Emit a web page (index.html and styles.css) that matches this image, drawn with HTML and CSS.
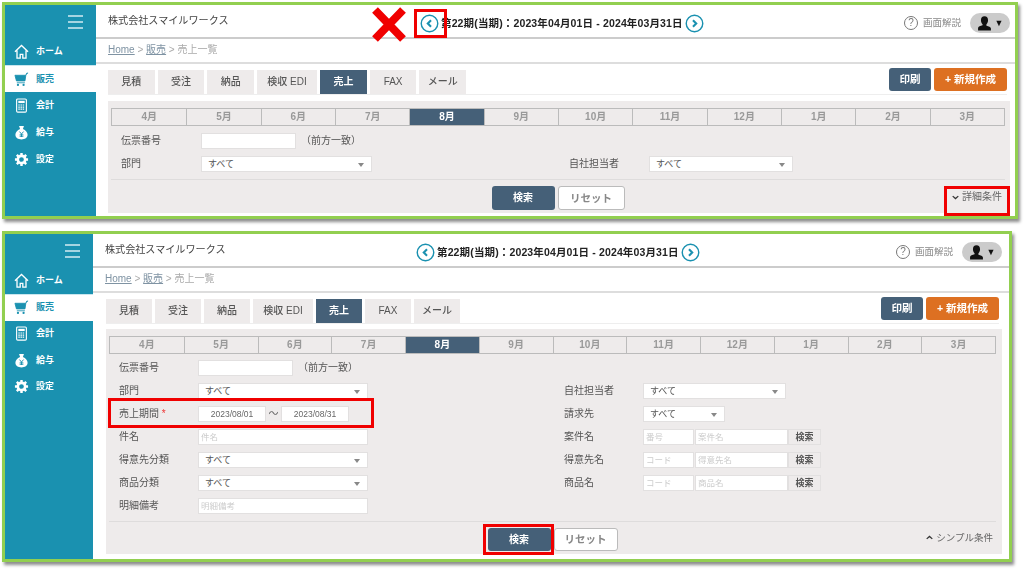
FILE: index.html
```html
<!DOCTYPE html>
<html lang="ja">
<head>
<meta charset="utf-8">
<title>売上一覧</title>
<link rel="stylesheet" href="styles.css">
</head>
<body>
<svg width="0" height="0" class="defs">
  <symbol id="i-prev" viewBox="0 0 20 20"><circle cx="10" cy="10" r="8.7" fill="none" stroke="currentColor" stroke-width="1.5"/><path d="M11.6 6.6 8.2 10l3.4 3.4" fill="none" stroke="currentColor" stroke-width="2.2"/></symbol>
  <symbol id="i-next" viewBox="0 0 20 20"><circle cx="10" cy="10" r="8.7" fill="none" stroke="currentColor" stroke-width="1.5"/><path d="M8.4 6.6 11.8 10l-3.4 3.4" fill="none" stroke="currentColor" stroke-width="2.2"/></symbol>
  <symbol id="i-home" viewBox="0 0 16 16"><path d="M1 8.2 8 1.6l7 6.6M3.2 6.8V15h3.4v-4h2.8v4h3.4V6.8" fill="none" stroke="currentColor" stroke-width="1.4"/></symbol>
  <symbol id="i-cart" viewBox="0 0 16 16"><path d="M1 3.5h11.6l-.9 6H2.6zM12.6 3.5 13.4 1.4 15 1M3 11.5h8.6" fill="currentColor" stroke="currentColor" stroke-width=".9"/><circle cx="4.2" cy="13.8" r="1.2" fill="currentColor"/><circle cx="10.2" cy="13.8" r="1.2" fill="currentColor"/></symbol>
  <symbol id="i-calc" viewBox="0 0 16 16"><rect x="2.8" y="1" width="10.4" height="14" rx="1.2" fill="none" stroke="currentColor" stroke-width="1.2"/><rect x="4.6" y="3" width="6.8" height="2.4" fill="currentColor"/><path d="M4.6 7.5h6.8M4.6 9.7h6.8M4.6 11.9h6.8" stroke="currentColor" stroke-width="1.2" stroke-dasharray="1.6 .7"/></symbol>
  <symbol id="i-bag" viewBox="0 0 16 16"><path d="M5.4 1h5.2L9.5 4.3c3 1.2 5 3.500 5 6.200C14.500 13.600 11.600 15.500 8 15.500S1.500 13.600 1.500 10.500c0-2.700 2-5 5-6.200z" fill="currentColor"/><path d="M5.800 7 8 9.600 10.200 7M8 9.600v3.200M6 10.500h4M6 12h4" fill="none" stroke="#1a91b0" stroke-width="1"/></symbol>
  <symbol id="i-gear" viewBox="0 0 16 16"><circle cx="8" cy="8" r="3.900" fill="none" stroke="currentColor" stroke-width="2.800"/><path d="M8 1v3M8 12v3M1 8h3M12 8h3M3 3l2.100 2.100M10.900 10.900 13 13M13 3l-2.100 2.100M5.100 10.900 3 13" stroke="currentColor" stroke-width="2.600"/></symbol>
  <symbol id="i-user" viewBox="0 0 14 14"><path d="M7 .3c2.200 0 3.300 1.500 3.300 3.700 0 1.600-.6 3-1.500 3.700v1.500c2 .6 4.200 1.200 4.200 2.500V13.600H1v-2.400c0-1.300 2.200-1.900 4.200-2.500V7.700C4.300 7 3.700 5.600 3.700 4 3.700 1.800 4.800.3 7 .3z" fill="currentColor"/></symbol>
</svg>

<section class="screen screen-a">
  <nav class="side">
    <div class="burger"><span></span><span></span><span></span></div>
    <a class="nav"><svg class="nav-ic"><use href="#i-home"/></svg>ホーム</a>
    <a class="nav on"><svg class="nav-ic"><use href="#i-cart"/></svg>販売</a>
    <a class="nav"><svg class="nav-ic"><use href="#i-calc"/></svg>会計</a>
    <a class="nav"><svg class="nav-ic"><use href="#i-bag"/></svg>給与</a>
    <a class="nav"><svg class="nav-ic"><use href="#i-gear"/></svg>設定</a>
  </nav>
  <div class="main">
    <header class="top">
      <div class="company">株式会社スマイルワークス</div>
      <div class="period">
        <svg class="arrow"><use href="#i-prev"/></svg>
        <b>第22期(当期)：2023年04月01日 - 2024年03月31日</b>
        <svg class="arrow"><use href="#i-next"/></svg>
      </div>
      <div class="tools">
        <span class="help"><i>?</i>画面解説</span>
        <span class="user"><svg class="user-ic"><use href="#i-user"/></svg><em>▼</em></span>
      </div>
    </header>
    <div class="crumbs"><u>Home</u> &gt; <u>販売</u> &gt; 売上一覧</div>
    <div class="tabbar">
      <div class="tabs">
        <a class="tab">見積</a><a class="tab">受注</a><a class="tab">納品</a><a class="tab wide">検収 EDI</a><a class="tab on">売上</a><a class="tab">FAX</a><a class="tab">メール</a>
      </div>
      <div class="actions"><button class="act print">印刷</button><button class="act create">+ 新規作成</button></div>
    </div>
    <div class="panel">
      <div class="months">
        <a>4月</a><a>5月</a><a>6月</a><a>7月</a><a class="on">8月</a><a>9月</a><a>10月</a><a>11月</a><a>12月</a><a>1月</a><a>2月</a><a>3月</a>
      </div>
      <div class="form">
        <div class="row"><label>伝票番号</label><input class="inp short" type="text"><span class="note">（前方一致）</span></div>
        <div class="row"></div>
        <div class="row"><label>部門</label><div class="sel">すべて</div></div>
        <div class="row"><label>自社担当者</label><div class="sel mid">すべて</div></div>
      </div>
      <div class="foot">
        <span></span>
        <div class="btns"><button class="go">検索</button><button class="reset">リセット</button></div>
        <a class="toggle"><svg class="chev" viewBox="0 0 10 6"><path d="M1 1l4 3.500L9 1" fill="none" stroke="currentColor" stroke-width="1.800"/></svg>詳細条件</a>
      </div>
    </div>
  </div>
</section>

<section class="screen screen-b">
  <nav class="side">
    <div class="burger"><span></span><span></span><span></span></div>
    <a class="nav"><svg class="nav-ic"><use href="#i-home"/></svg>ホーム</a>
    <a class="nav on"><svg class="nav-ic"><use href="#i-cart"/></svg>販売</a>
    <a class="nav"><svg class="nav-ic"><use href="#i-calc"/></svg>会計</a>
    <a class="nav"><svg class="nav-ic"><use href="#i-bag"/></svg>給与</a>
    <a class="nav"><svg class="nav-ic"><use href="#i-gear"/></svg>設定</a>
  </nav>
  <div class="main">
    <header class="top">
      <div class="company">株式会社スマイルワークス</div>
      <div class="period">
        <svg class="arrow"><use href="#i-prev"/></svg>
        <b>第22期(当期)：2023年04月01日 - 2024年03月31日</b>
        <svg class="arrow"><use href="#i-next"/></svg>
      </div>
      <div class="tools">
        <span class="help"><i>?</i>画面解説</span>
        <span class="user"><svg class="user-ic"><use href="#i-user"/></svg><em>▼</em></span>
      </div>
    </header>
    <div class="crumbs"><u>Home</u> &gt; <u>販売</u> &gt; 売上一覧</div>
    <div class="tabbar">
      <div class="tabs">
        <a class="tab">見積</a><a class="tab">受注</a><a class="tab">納品</a><a class="tab wide">検収 EDI</a><a class="tab on">売上</a><a class="tab">FAX</a><a class="tab">メール</a>
      </div>
      <div class="actions"><button class="act print">印刷</button><button class="act create">+ 新規作成</button></div>
    </div>
    <div class="panel">
      <div class="months">
        <a>4月</a><a>5月</a><a>6月</a><a>7月</a><a class="on">8月</a><a>9月</a><a>10月</a><a>11月</a><a>12月</a><a>1月</a><a>2月</a><a>3月</a>
      </div>
      <div class="form">
        <div class="row"><label>伝票番号</label><input class="inp short" type="text"><span class="note">（前方一致）</span></div>
        <div class="row"></div>
        <div class="row"><label>部門</label><div class="sel">すべて</div></div>
        <div class="row"><label>自社担当者</label><div class="sel mid">すべて</div></div>
        <div class="row"><label>売上期間 <s>*</s></label><input class="inp date" type="text" value="2023/08/01"><span class="tilde">〜</span><input class="inp date" type="text" value="2023/08/31"></div>
        <div class="row"><label>請求先</label><div class="sel small">すべて</div></div>
        <div class="row"><label>件名</label><input class="inp long" type="text" placeholder="件名"></div>
        <div class="row"><label>案件名</label><input class="inp code" type="text" placeholder="番号"><input class="inp name" type="text" placeholder="案件名"><button class="find">検索</button></div>
        <div class="row"><label>得意先分類</label><div class="sel">すべて</div></div>
        <div class="row"><label>得意先名</label><input class="inp code" type="text" placeholder="コード"><input class="inp name" type="text" placeholder="得意先名"><button class="find">検索</button></div>
        <div class="row"><label>商品分類</label><div class="sel">すべて</div></div>
        <div class="row"><label>商品名</label><input class="inp code" type="text" placeholder="コード"><input class="inp name" type="text" placeholder="商品名"><button class="find">検索</button></div>
        <div class="row"><label>明細備考</label><input class="inp long" type="text" placeholder="明細備考"></div>
        <div class="row"></div>
      </div>
      <div class="foot">
        <span></span>
        <div class="btns"><button class="go">検索</button><button class="reset">リセット</button></div>
        <a class="toggle"><svg class="chev" viewBox="0 0 10 6"><path d="M1 5l4-3.500L9 5" fill="none" stroke="currentColor" stroke-width="1.800"/></svg>シンプル条件</a>
      </div>
    </div>
  </div>
</section>

<svg class="cross" viewBox="0 0 34 35"><path d="M3 3l28 29M31 3 3 32" stroke="#f00000" stroke-width="8"/></svg>
<div class="mark mark-prev"></div>
<div class="mark mark-detail"></div>
<div class="mark mark-date"></div>
<div class="mark mark-search"></div>
</body>
</html>
```
FILE: styles.css
```css
* { box-sizing: border-box; }
html, body { margin: 0; padding: 0; }
body {
  position: relative;
  width: 1024px;
  height: 569px;
  overflow: hidden;
  background: #fff;
  padding: 2px 0 0 2px;
  font: 10px/1.2 "Liberation Sans", "Noto Sans CJK JP", sans-serif;
  color: #555;
}
.defs { position: absolute; }
a { display: block; }
b, em, i, s { font-style: normal; text-decoration: none; }
button { font: inherit; margin: 0; padding: 0; }

.screen {
  display: flex;
  border: 3px solid #92cf50;
  background: #fff;
  box-shadow: 2px 3px 3px rgba(0, 0, 0, .45);
  filter: blur(.3px);
}
.screen-a { width: 1016px; height: 217px; --pitch: 27px; }
.screen-b { width: 1010px; height: 331px; margin-top: 12px; --pitch: 26.500px; }

/* sidebar */
.side { flex: none; width: 91px; background: #1a91b0; color: #fff; }
.screen-b .side { width: 88px; }
.burger { height: 33px; padding: 10px 13px 0 0; display: flex; flex-direction: column; align-items: flex-end; gap: 4.500px; }
.screen-b .burger { height: 33.500px; }
.burger span { display: block; width: 15px; height: 1.500px; background: #a5d5e2; }
.nav { height: var(--pitch); display: flex; align-items: center; padding-left: 9px; gap: 7px; font-size: 9px; font-weight: 700; }
.nav.on { background: #fff; color: #1a91b0; border-top: 1px solid #c9e6ee; }
.nav-ic { width: 15px; height: 15px; flex: none; }

/* main */
.main { flex: 1; min-width: 0; display: flex; flex-direction: column; }
.top { height: 34px; flex: none; display: flex; align-items: center; padding: 4px 5px 0 12px; border-bottom: 2px solid #ccc; }
.screen-b .top { padding-right: 7px; }
.company { width: 312px; font-size: 10.100px; color: #444; margin-top: -3px; }
.screen-b .company { width: 311px; }
.period { display: flex; align-items: center; gap: 2px; color: #222; font-size: 10.500px; letter-spacing: .14px; }
.arrow { width: 19px; height: 19px; color: #1a91b0; flex: none; }
.tools { margin-left: auto; display: flex; align-items: center; gap: 9px; }
.help { display: flex; align-items: center; gap: 5px; font-size: 9.500px; color: #888; }
.help i { width: 14px; height: 14px; border: 1.300px solid #777; border-radius: 50%; display: flex; align-items: center; justify-content: center; font-size: 10px; color: #777; }
.user { width: 40px; height: 20px; border-radius: 10px; background: #cbcbcb; display: flex; align-items: center; justify-content: center; gap: 3px; color: #111; }
.user-ic { width: 15px; height: 15px; }
.user em { font-size: 9px; line-height: 1; }
.crumbs { height: 25px; flex: none; padding: 5px 0 0 12px; border-bottom: 2px solid #ddd; color: #aaa; font-size: 10px; }
.crumbs u { color: #7f93a3; }

.tabbar { flex: none; display: flex; justify-content: space-between; align-items: flex-start; margin: 6px 8px 0 12px; height: 25px; border-bottom: 1px solid #eee; }
.screen-b .tabbar { margin: 6px 10px 0 13px; }
.tabs { display: flex; gap: 3px; }
.tab { width: 46.700px; height: 24px; background: #eeebeb; display: flex; align-items: center; justify-content: center; font-weight: 500; color: #555; }
.tab.wide { width: 60px; }
.tab.on { background: #456078; color: #fff; font-weight: 700; }
.screen-b .tab { width: 46px; }
.screen-b .tab.wide { width: 60px; }
.actions { display: flex; gap: 3px; margin-top: -2px; }
.act { height: 23px; border: 0; border-radius: 3px; color: #fff; font-weight: 700; font-size: 10.500px; }
.print { width: 42px; background: #456078; }
.create { width: 73px; background: #dd7022; }

.panel { flex: 1; margin: 6px 5px 3px 12px; background: #eeebeb; padding: 7px 5px 0 3px; display: flex; flex-direction: column; }
.screen-b .panel { margin: 5px 7px 5px 13px; padding-right: 6px; }
.months { flex: none; height: 18px; display: grid; grid-template-columns: repeat(12, 1fr); border: 1px solid #bbb; }
.months a { display: flex; align-items: center; justify-content: center; color: #999; font-weight: 700; border-left: 1px solid #bbb; }
.months a:first-child { border-left: 0; }
.months a.on { background: #456078; color: #fff; }

.form { display: grid; grid-template-columns: 448px 1fr; row-gap: 7px; margin: 7px 0 0 10px; }
.screen-b .form { grid-template-columns: 445px 1fr; margin-top: 6px; }
.row { display: flex; align-items: center; height: 16px; }
.row label { flex: none; width: 80px; color: #555; }
.screen-b .row label { width: 79px; }
.row label s { color: #e33; }
.inp { height: 16px; padding: 0 2px; border: 1px solid #e2e0e0; background: #fff; font: inherit; font-size: 8.500px; color: #666; outline: 0; border-radius: 0; }
.inp::placeholder { color: #ccc; }
.short { width: 95px; }
.long { width: 170px; }
.date { width: 68px; text-align: center; }
.code { width: 51px; margin-right: 1px; }
.name { width: 93px; }
.tilde { width: 15px; text-align: center; color: #666; }
.note { margin-left: 5px; color: #555; }
.sel { position: relative; width: 171px; height: 16px; padding-left: 6px; display: flex; align-items: center; background: #fff; border: 1px solid #e2e0e0; font-size: 9px; color: #555; }
.screen-b .sel { width: 170px; }
.sel::after { content: ""; position: absolute; right: 7px; top: 6px; border: 3px solid transparent; border-top: 4px solid #888; border-bottom: 0; }
.screen-a .sel.mid { width: 144px; }
.screen-b .sel.mid { width: 143px; }
.screen-b .sel.small { width: 82px; }
.find { width: 33px; height: 16px; border: 1px solid #e2e0e0; background: #eeebeb; font-size: 9px; font-weight: 700; color: #555; }

.foot { margin-top: 7px; padding-top: 6px; border-top: 1px solid #dedcdc; display: grid; grid-template-columns: 1fr auto 1fr; align-items: start; }
.btns { display: flex; gap: 3px; }
.go { width: 63px; height: 24px; border: 0; border-radius: 3px; background: #456078; color: #fff; font-weight: 700; }
.reset { width: 67px; height: 24px; border: 1px solid #bbb; border-radius: 3px; background: #fff; color: #888; font-weight: 700; font-size: 10.500px; }
.screen-b .go, .screen-b .reset { height: 23px; }
.screen-b .reset { width: 64px; }
.toggle { justify-self: end; display: flex; align-items: center; gap: 3px; padding: 5px 3px 0 0; color: #666; }
.screen-b .toggle { padding-top: 4px; font-size: 9.500px; }
.chev { width: 7px; height: 5px; color: #333; }

/* annotations */
.mark { position: absolute; border: 3px solid #f00000; }
.mark-prev { left: 414px; top: 9px; width: 33px; height: 29px; }
.mark-detail { left: 944px; top: 186px; width: 66px; height: 30px; }
.mark-date { left: 108px; top: 398px; width: 266px; height: 30px; }
.mark-search { left: 483px; top: 524px; width: 71px; height: 31px; }
.cross { position: absolute; left: 372px; top: 7px; width: 34px; height: 35px; }
```
